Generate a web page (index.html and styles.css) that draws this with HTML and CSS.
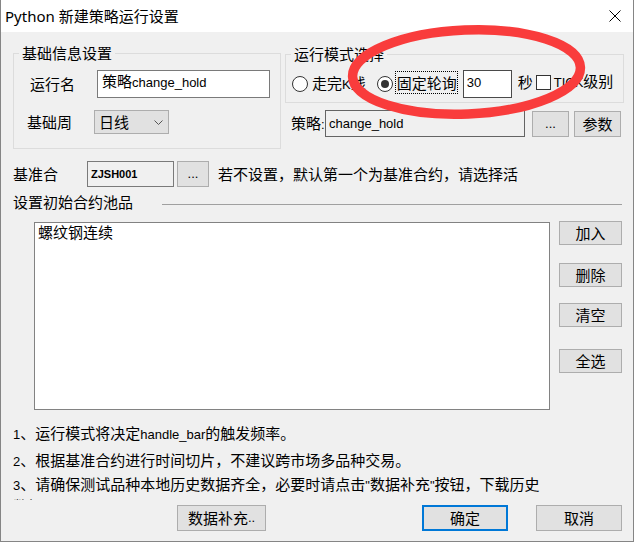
FILE: index.html
```html
<!DOCTYPE html>
<html lang="zh-CN">
<head>
<meta charset="utf-8">
<title>Python 新建策略运行设置</title>
<link rel="stylesheet" href="styles.css">
</head>
<body>
<div class="win">
  <div class="titlebar">
    <span class="title">Python 新建策略运行设置</span>
    <svg class="close" width="12" height="12" viewBox="0 0 12 12"><path d="M0.5 0.5L11.5 11.5M11.5 0.5L0.5 11.5" stroke="#000" stroke-width="1" fill="none"/></svg>
  </div>
  <div class="body">
    <div class="toprow">
      <div class="group g1">
        <div class="legend">基础信息设置</div>
        <div class="frow r1">
          <span class="lbl l-name">运行名</span>
          <div class="edit e-name">策略<span class="lat">change_hold</span></div>
        </div>
        <div class="frow r2">
          <span class="lbl l-period">基础周</span>
          <div class="combo"><span>日线</span><svg width="9" height="5" viewBox="0 0 9 5"><polyline points="0.5,0.5 4.5,4.5 8.5,0.5" fill="none" stroke="#555" stroke-width="1"/></svg></div>
        </div>
      </div>
      <div class="rightcol">
        <div class="group g2">
          <div class="legend">运行模式选择</div>
          <div class="frow modes">
            <span class="radio r-first"></span>
            <span class="rtext">走完<span class="lat">K</span>线</span>
            <span class="radio r-second"><span class="dot"></span></span>
            <span class="focus">固定轮询</span>
            <div class="edit e-sec"><span class="lat">30</span></div>
            <span class="sec">秒</span>
            <span class="check"></span>
            <span class="tick"><span class="lat">TICK</span>级别</span>
          </div>
        </div>
        <div class="frow strat">
          <span class="l-strat">策略<span class="lat">:</span></span>
          <div class="edit e-strat"><span class="lat">change_hold</span></div>
          <div class="btn b-browse"><span class="lat">...</span></div>
          <div class="btn b-param">参数</div>
        </div>
      </div>
    </div>

    <div class="frow base">
      <span class="l-base">基准合</span>
      <div class="edit e-base"><span class="lat">ZJSH001</span></div>
      <div class="btn b-base"><span class="lat">...</span></div>
      <span class="hint">若不设置，默认第一个为基准合约，请选择活</span>
    </div>

    <div class="frow pooltitle">
      <span>设置初始合约池品</span>
      <div class="sep"></div>
    </div>

    <div class="pool">
      <div class="list">螺纹钢连续</div>
      <div class="side">
        <div class="btn b-add">加入</div>
        <div class="btn b-del">删除</div>
        <div class="btn b-clr">清空</div>
        <div class="btn b-all">全选</div>
      </div>
    </div>

    <div class="note n1"><span class="lat">1</span>、运行模式将决定<span class="lat">handle_bar</span>的触发频率。</div>
    <div class="note n2"><span class="lat">2</span>、根据基准合约进行时间切片，不建议跨市场多品种交易。</div>
    <div class="note n3"><span class="lat">3</span>、请确保测试品种本地历史数据齐全，必要时请点击<span class="lat">&quot;</span>数据补充<span class="lat">&quot;</span>按钮，下载历史数据</div>

    <div class="foot">
      <div class="btn b-data">数据补充<span class="lat">..</span></div>
      <div class="btn b-ok">确定</div>
      <div class="btn b-cancel">取消</div>
    </div>
  </div>
</div>
<svg class="mark" width="636" height="543" viewBox="0 0 636 543"><ellipse cx="466.5" cy="72" rx="114" ry="42" transform="rotate(-2.4 466.5 72)" fill="none" stroke="#f93c3c" stroke-width="9.5"/></svg>
</body>
</html>
```
FILE: styles.css
```css
body {
  margin: 0;
  background: #ffffff;
}

.win {
  width: 634px;
  height: 542px;
  box-sizing: border-box;
  border: 1px solid #858585;
  border-top: 0;
  background: #f0f0f0;
  font-family: "Noto Sans CJK SC", sans-serif;
  font-size: 15px;
  line-height: 18px;
  color: #000;
}

.win * {
  box-sizing: border-box;
}

.lat {
  font-family: "Liberation Sans", Arial, sans-serif;
  font-size: 13px;
}

.titlebar {
  height: 32px;
  background: #fff;
  display: flex;
  align-items: center;
  justify-content: space-between;
  padding: 0 12px 0 4px;
}

.title {
  font-family: "Noto Sans", "Noto Sans CJK SC", sans-serif;
  font-size: 15px;
}

.close {
  display: block;
}

.body {
  padding-left: 12px;
}

.toprow {
  display: flex;
  align-items: flex-start;
  margin-top: 21px;
}

.group {
  border: 1px solid #dcdcdc;
}

.legend {
  width: fit-content;
  margin: -10px 0 0 5px;
  padding: 0 3px;
  line-height: 18px;
  background: #f0f0f0;
}

.g1 {
  width: 268px;
  height: 96px;
  flex: none;
}

.frow {
  display: flex;
  align-items: center;
  white-space: nowrap;
}

.frow > * {
  flex: none;
}

.r1 {
  margin-top: 8px;
  height: 28px;
}

.l-name {
  margin-left: 16px;
  width: 67px;
}

.edit {
  border: 1px solid #7a7a7a;
  background: #fff;
  padding: 1px 0 0 4px;
  height: 28px;
  white-space: nowrap;
}

.e-name {
  width: 173px;
}

.r2 {
  margin-top: 12px;
  height: 24px;
}

.l-period {
  margin-left: 13px;
  width: 67px;
}

.combo {
  width: 75px;
  height: 24px;
  background: #e1e1e1;
  border: 1px solid #adadad;
  display: flex;
  align-items: center;
  justify-content: space-between;
  padding: 0 5px 0 4px;
}

.combo svg {
  display: block;
}

.rightcol {
  margin-left: 4px;
  width: 339px;
  flex: none;
}

.g2 {
  margin-top: 1px;
  height: 49px;
}

.modes {
  margin-top: 7px;
  height: 28px;
}

.radio {
  width: 16px;
  height: 16px;
  border: 1px solid #333;
  border-radius: 50%;
  background: #fff;
  display: flex;
  align-items: center;
  justify-content: center;
}

.dot {
  width: 8px;
  height: 8px;
  border-radius: 50%;
  background: #333;
}

.r-first {
  margin-left: 6px;
}

.rtext {
  margin-left: 4px;
}

.r-second {
  margin-left: 11px;
}

.focus {
  margin-left: 2px;
  width: 63px;
  height: 23px;
  border: 1px dotted #000;
  padding-left: 1px;
  line-height: 21px;
  margin-bottom: 4px;
  white-space: nowrap;
  overflow: hidden;
}

.e-sec {
  margin-left: 5px;
  width: 49px;
  padding-left: 3px;
  border-color: #4a4a4a;
}

.sec {
  margin-left: 6px;
  margin-bottom: 4px;
}

.check {
  margin-left: 3px;
  width: 15px;
  height: 15px;
  border: 1px solid #333;
  background: #fff;
  margin-bottom: 4px;
}

.tick {
  margin-left: 3px;
  margin-bottom: 4px;
}

.strat {
  margin-top: 7px;
  height: 27px;
}

.l-strat {
  margin-left: 6px;
  width: 34px;
}

.e-strat {
  width: 200px;
  height: 27px;
  background: #f0f0f0;
  border-color: #646464;
  padding: 2px 0 0 3px;
}

.btn {
  background: #e1e1e1;
  border: 1px solid #adadad;
  display: flex;
  align-items: center;
  justify-content: center;
  flex: none;
  white-space: nowrap;
}

.b-browse {
  margin-left: 7px;
  width: 37px;
  height: 26px;
}

.b-param {
  margin-left: 5px;
  width: 47px;
  height: 26px;
}

.base {
  margin-top: 12px;
  height: 26px;
}

.l-base {
  width: 74px;
}

.e-base {
  width: 87px;
  height: 26px;
  background: #f0f0f0;
  padding: 2px 0 0 3px;
  line-height: 16px;
}

.e-base .lat {
  font-size: 11px;
  font-weight: bold;
}

.b-base {
  margin-left: 3px;
  width: 32px;
  height: 26px;
}

.hint {
  margin-left: 9px;
}

.pooltitle {
  margin-top: 6px;
  height: 18px;
}

.pooltitle .sep {
  flex: 1;
  height: 1px;
  background: #a0a0a0;
  margin: 4px 11px 0 29px;
}

.pool {
  display: flex;
  align-items: flex-start;
  margin-top: 11px;
}

.list {
  margin-left: 21px;
  width: 516px;
  height: 188px;
  background: #fff;
  border: 1px solid #828282;
  padding-left: 3px;
  flex: none;
}

.side {
  margin-left: 9px;
  display: flex;
  flex-direction: column;
}

.side .btn {
  width: 63px;
  height: 24px;
}

.b-add {
  margin-top: -1px;
}

.b-del {
  margin-top: 18px;
}

.b-clr {
  margin-top: 16px;
}

.b-all {
  margin-top: 22px;
}

.note {
  line-height: 20px;
}

.n1 {
  margin-top: 13px;
}

.n2 {
  margin-top: 5px;
}

.n3 {
  margin-top: 2px;
  width: 535px;
  height: 26px;
  overflow: hidden;
}

.foot {
  margin-top: 5px;
  display: flex;
  height: 26px;
}

.foot .btn {
  height: 26px;
}

.b-data {
  margin-left: 164px;
  width: 89px;
}

.b-ok {
  margin-left: 156px;
  width: 86px;
  border: 2px solid #0078d7;
}

.b-cancel {
  margin-left: 28px;
  width: 86px;
}

.mark {
  position: absolute;
  left: 0;
  top: 0;
  pointer-events: none;
}
```
